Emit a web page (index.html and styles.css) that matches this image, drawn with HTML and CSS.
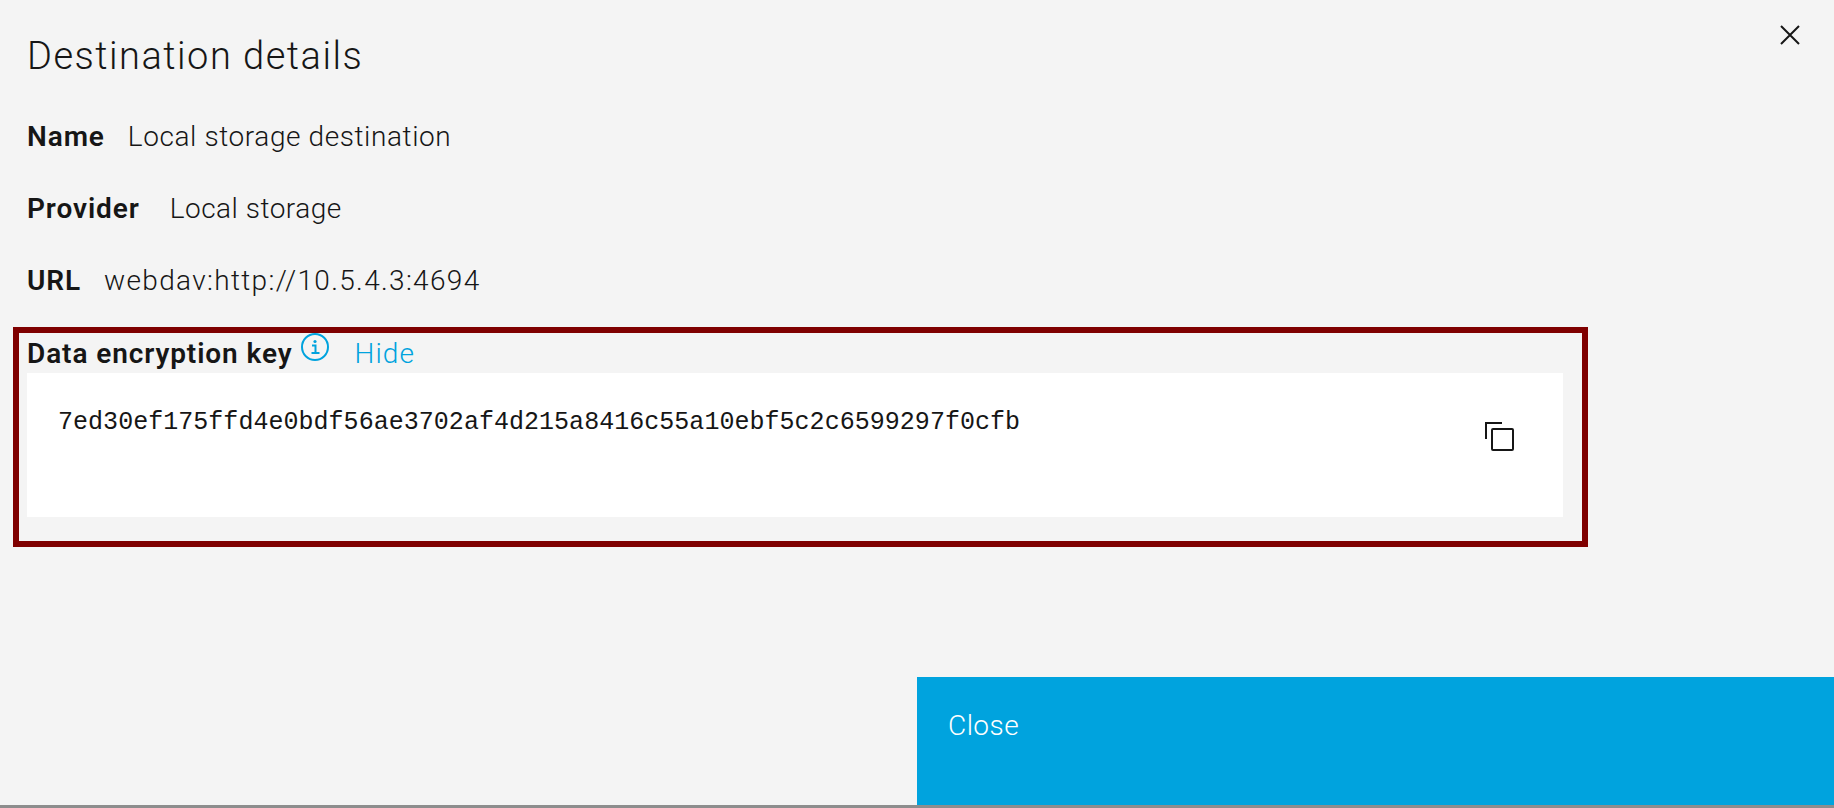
FILE: index.html
```html
<!DOCTYPE html>
<html lang="en">
  <head>
    <meta charset="UTF-8">
    <title>Destination details</title>
    <link rel="stylesheet" href="styles.css">
  </head>
  <body>
    <div class="modal">
      <button class="close-x" aria-label="Close">
        <svg viewBox="0 0 20 20" width="20" height="20"><path d="M1 1 19 19M19 1 1 19"/></svg>
      </button>
      <div class="content">
        <h1>Destination details</h1>
        <p class="row row-name"><b>Name</b><span>Local storage destination</span></p>
        <p class="row row-provider"><b>Provider</b><span>Local storage</span></p>
        <p class="row row-url"><b>URL</b><span>webdav:http://10.5.4.3:4694</span></p>
        <div class="key-box">
          <div class="key-head">
            <b>Data encryption key</b>
            <svg class="info" viewBox="0 0 28 28" width="28" height="28">
              <circle cx="14" cy="14" r="13"/>
              <path d="M11 12.5h3.5V20M10.5 20h8"/>
              <circle class="dot" cx="14" cy="8.5" r="1.6"/>
            </svg>
            <a href="#">Hide</a>
          </div>
          <div class="key-value">
            <code>7ed30ef175ffd4e0bdf56ae3702af4d215a8416c55a10ebf5c2c6599297f0cfb</code>
            <svg class="copy" viewBox="0 0 28 28" width="28" height="28">
              <path d="M1 17V1H17"/>
              <rect x="7" y="7" width="21" height="21" rx="1"/>
            </svg>
          </div>
        </div>
      </div>
      <div class="footer">
        <button class="primary">Close</button>
      </div>
    </div>
  </body>
</html>
```

FILE: styles.css
```css
:root {
  --bg: #f4f4f4;
  --text: #161616;
  --blue: #00a3de;
  --red: #7f0000;
}

html, body {
  margin: 0;
  padding: 0;
  height: 100%;
  font-family: Roboto, "Liberation Sans", sans-serif;
  color: var(--text);
  background: var(--bg);
}

.modal {
  position: relative;
  box-sizing: border-box;
  height: 808px;
  display: flex;
  flex-direction: column;
  border-bottom: 3px solid #8d8d8d;
  overflow: hidden;
}

.close-x {
  position: absolute;
  top: 25px;
  right: 34px;
  width: 20px;
  height: 20px;
  padding: 0;
  border: 0;
  background: none;
}

.close-x svg {
  display: block;
  fill: none;
  stroke: var(--text);
  stroke-width: 2;
}

.content {
  flex: 1;
  padding: 34px 0 0 13px;
}

h1 {
  margin: 0 0 0 14px;
  font-size: 38px;
  line-height: 44px;
  font-weight: 300;
  letter-spacing: 1.5px;
}

.row {
  margin: 0 0 0 14px;
  height: 72px;
  display: flex;
  align-items: center;
  font-size: 28px;
  font-weight: 300;
  letter-spacing: 0.5px;
}

.row-name {
  margin-top: 22px;
}

.row b {
  font-weight: 600;
  letter-spacing: 0.9px;
}

.row-name b {
  margin-right: 23px;
}

.row-name span {
  letter-spacing: 0.59px;
}

.row-provider b {
  margin-right: 30px;
}

.row-url b {
  margin-right: 23px;
}

.row-url span {
  letter-spacing: 1.33px;
}

.key-box {
  box-sizing: border-box;
  width: 1575px;
  height: 220px;
  margin-top: 11px;
  padding: 0 19px 24px 8px;
  border: 6px solid var(--red);
  display: flex;
  flex-direction: column;
}

.key-head {
  box-sizing: border-box;
  height: 40px;
  padding-bottom: 2px;
  display: flex;
  align-items: flex-end;
  font-size: 28px;
  line-height: 34px;
}

.key-head b {
  font-weight: 600;
  letter-spacing: 0.9px;
}

.info {
  align-self: flex-start;
  margin-left: 8px;
  fill: none;
  stroke: var(--blue);
  stroke-width: 2;
}

.info .dot {
  fill: var(--blue);
  stroke: none;
}

.key-head a {
  margin-left: 26px;
  color: var(--blue);
  text-decoration: none;
  font-weight: 300;
  letter-spacing: 1.1px;
}

.key-value {
  flex: 1;
  display: flex;
  justify-content: space-between;
  align-items: flex-start;
  background: #fff;
  padding: 35px 50px 0 31px;
}

code {
  font-family: "Liberation Mono", monospace;
  font-size: 25px;
  line-height: 30px;
  letter-spacing: 0.03px;
}

.copy {
  margin-top: 14px;
  fill: none;
  stroke: var(--text);
  stroke-width: 2;
  overflow: visible;
}

.footer {
  display: flex;
  justify-content: flex-end;
}

.primary {
  box-sizing: border-box;
  width: 917px;
  height: 128px;
  padding: 29px 31px 0;
  border: 0;
  background: var(--blue);
  color: #fff;
  font: 300 28px/40px Roboto, sans-serif;
  letter-spacing: 0.45px;
  text-align: left;
  display: flex;
}
```
